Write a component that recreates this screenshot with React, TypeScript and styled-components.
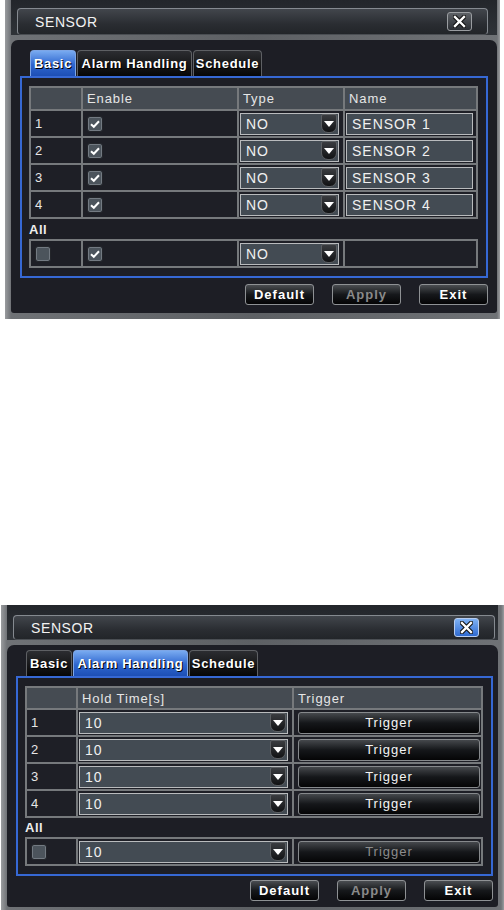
import React from "react";
import styled, { createGlobalStyle } from "styled-components";

const GlobalStyle = createGlobalStyle`
  html, body { margin: 0; padding: 0; background: #ffffff; }
  body { font-family: "Liberation Sans", Arial, sans-serif; }
`;

const Page = styled.div`
  width: 504px;
  height: 910px;
  display: flex;
  flex-direction: column;
  overflow: hidden;
`;

const Frame = styled.div<{ $left: number; $top: number; $width: number; $padR: number; $padB: number }>`
  margin-left: ${p => p.$left}px;
  margin-top: ${p => p.$top}px;
  width: ${p => p.$width}px;
  box-sizing: border-box;
  padding: 0 ${p => p.$padR}px ${p => p.$padB}px 6px;
  background: linear-gradient(90deg, #9a9c9f 0, #6f7276 6px, #5d6064 50%, #6f7276 calc(100% - 3px), #9a9c9f 100%);
  display: flex;
  flex-direction: column;
`;

const Header = styled.div<{ $padT: number; $padR: number }>`
  padding: ${p => p.$padT}px ${p => p.$padR}px 0 6px;
  background: linear-gradient(#23262b, #2f3338);
`;

const TitleBar = styled.div<{ $h: number }>`
  height: ${p => p.$h}px;
  box-sizing: border-box;
  border: 1px solid #858a90;
  border-bottom-color: #4a4e53;
  border-radius: 4px;
  background: linear-gradient(#42464c, #2a2d32 60%, #222529);
  display: flex;
  align-items: center;
  justify-content: space-between;
  padding: 0 15px 0 17px;
  color: #f2f2f2;
  font-size: 14px;
  letter-spacing: 0.6px;
`;

const CloseBtn = styled.div<{ $blue?: boolean }>`
  width: 25px;
  height: 19px;
  box-sizing: border-box;
  border: 1px solid ${p => (p.$blue ? "#b8cdf0" : "#9a9da1")};
  border-radius: 3px;
  background: ${p =>
    p.$blue ? "linear-gradient(#7fb2f5, #2f6ad0)" : "linear-gradient(#5d6166, #2b2e33)"};
  display: flex;
  align-items: center;
  justify-content: center;
`;

const Body = styled.div<{ $padT: number; $padR: number; $padB: number }>`
  margin-top: 5px;
  background: #1d1e25;
  border-radius: 7px 7px 3px 3px;
  padding: ${p => p.$padT}px ${p => p.$padR}px ${p => p.$padB}px 9px;
  display: flex;
  flex-direction: column;
`;

const TabRow = styled.div`
  display: flex;
  gap: 1px;
  padding-left: 10px;
`;

const Tab = styled.div<{ $active?: boolean; $w: number }>`
  width: ${p => p.$w}px;
  height: 26px;
  box-sizing: border-box;
  border: 1px solid ${p => (p.$active ? "#7ea6e6" : "#5e6064")};
  border-bottom: none;
  border-radius: 4px 4px 0 0;
  background: ${p =>
    p.$active ? "linear-gradient(#78aaf0, #2e66cf 55%, #1d4fb5)" : "linear-gradient(#2c2d31, #060606)"};
  color: #ffffff;
  font-size: 13px;
  font-weight: bold;
  letter-spacing: 0.7px;
  white-space: nowrap;
  display: flex;
  align-items: center;
  justify-content: center;
  text-shadow: 1px 1px 0 #000;
`;

const BlueBox = styled.div`
  border: 2px solid #3668d4;
  padding: 8px 8px 8px 7px;
`;

const Grid = styled.div<{ $cols: string; $headH?: number }>`
  display: grid;
  grid-template-columns: ${p => p.$cols};
  ${p => (p.$headH ? `grid-template-rows: ${p.$headH}px;` : "")}
  grid-auto-rows: 25px;
  gap: 2px;
  padding: 2px;
  background: #76797c;
`;

const Cell = styled.div<{ $head?: boolean }>`
  background: ${p => (p.$head ? "#454b52" : "#1e1f26")};
  display: flex;
  align-items: center;
  padding-left: 4px;
  color: #e6e6e6;
  font-size: 13px;
  letter-spacing: 0.9px;
  min-width: 0;
`;

const AllLabel = styled.div<{ $h: number }>`
  height: ${p => p.$h}px;
  display: flex;
  align-items: center;
  color: #eeeeee;
  font-size: 13px;
  font-weight: bold;
  letter-spacing: 0.5px;
`;

const Check = styled.span`
  width: 16px;
  height: 16px;
  box-sizing: border-box;
  border: 1px solid #23252a;
  border-radius: 3px;
  background: #4c545c;
  box-shadow: inset 0 0 0 1px #737a82;
  display: flex;
  align-items: center;
  justify-content: center;
`;

const Field = styled.div<{ $h: number; $mr: number }>`
  flex: 1;
  height: ${p => p.$h}px;
  box-sizing: border-box;
  margin: 0 ${p => p.$mr}px 0 -3px;
  border: 1px solid #b9bbbd;
  background: #434b53;
  display: flex;
  align-items: center;
  justify-content: space-between;
  padding-left: 5px;
  color: #f0f0f0;
  font-size: 14px;
  letter-spacing: 1px;
`;

const DropBtn = styled.span`
  width: 16px;
  height: 19px;
  box-sizing: border-box;
  margin-right: 1px;
  border: 1px solid #5b5e62;
  border-radius: 2px 2px 7px 7px;
  background: linear-gradient(#3a3c40, #111214);
  display: flex;
  align-items: center;
  justify-content: center;
`;

const TriggerBtn = styled.div<{ $disabled?: boolean }>`
  flex: 1;
  height: 22px;
  box-sizing: border-box;
  margin-right: 1px;
  border: 1px solid #86898c;
  border-radius: 3px;
  background: linear-gradient(#45484c, #15171a 50%, #050506);
  color: ${p => (p.$disabled ? "#8c8c8c" : "#f4f4f4")};
  font-size: 13px;
  letter-spacing: 1px;
  display: flex;
  align-items: center;
  justify-content: center;
`;

const Footer = styled.div<{ $mt: number; $padR: number }>`
  margin-top: ${p => p.$mt}px;
  padding-right: ${p => p.$padR}px;
  display: flex;
  justify-content: flex-end;
  gap: 18px;
`;

const Button = styled.div<{ $disabled?: boolean }>`
  width: 69px;
  height: 21px;
  box-sizing: border-box;
  border: 1px solid #8e9194;
  border-radius: 3px;
  background: linear-gradient(#4a4d51, #16181b 50%, #040405);
  color: ${p => (p.$disabled ? "#8a8a8a" : "#ffffff")};
  font-size: 13px;
  font-weight: bold;
  letter-spacing: 1px;
  display: flex;
  align-items: center;
  justify-content: center;
`;

const CloseIcon = () => (
  <svg width="13" height="13" viewBox="0 0 13 13">
    <path d="M2 2 L11 11 M11 2 L2 11" stroke="#111" strokeWidth="4.5" strokeLinecap="square" />
    <path d="M2 2 L11 11 M11 2 L2 11" stroke="#fff" strokeWidth="2.4" strokeLinecap="square" />
  </svg>
);

const Tick = () => (
  <svg width="12" height="12" viewBox="0 0 12 12">
    <path d="M2 6.2 L4.8 8.8 L10 3.2" fill="none" stroke="#fff" strokeWidth="2" />
  </svg>
);

const Arrow = () => (
  <svg width="10" height="8" viewBox="0 0 10 8">
    <polygon points="0,1 10,1 5,7" fill="#fff" />
  </svg>
);

const CheckBox = ({ checked }: { checked?: boolean }) => <Check>{checked && <Tick />}</Check>;

const Select = ({ value }: { value: string }) => (
  <Field $h={22} $mr={4}>
    {value}
    <DropBtn>
      <Arrow />
    </DropBtn>
  </Field>
);

type DialogProps = {
  left: number;
  top: number;
  width: number;
  frameR: number;
  frameB: number;
  titleT: number;
  titleR: number;
  titleH: number;
  blueClose?: boolean;
  bodyT: number;
  bodyR: number;
  bodyB: number;
  active: number;
  footerMt: number;
  footerR: number;
  children: React.ReactNode;
};

const Dialog = (p: DialogProps) => (
  <Frame $left={p.left} $top={p.top} $width={p.width} $padR={p.frameR} $padB={p.frameB}>
    <Header $padT={p.titleT} $padR={p.titleR}>
      <TitleBar $h={p.titleH}>
        SENSOR
        <CloseBtn $blue={p.blueClose}>
          <CloseIcon />
        </CloseBtn>
      </TitleBar>
    </Header>
    <Body $padT={p.bodyT} $padR={p.bodyR} $padB={p.bodyB}>
      <TabRow>
        <Tab $w={46} $active={p.active === 0}>Basic</Tab>
        <Tab $w={115} $active={p.active === 1}>Alarm Handling</Tab>
        <Tab $w={69} $active={p.active === 2}>Schedule</Tab>
      </TabRow>
      <BlueBox>{p.children}</BlueBox>
      <Footer $mt={p.footerMt} $padR={p.footerR}>
        <Button>Default</Button>
        <Button $disabled>Apply</Button>
        <Button>Exit</Button>
      </Footer>
    </Body>
  </Frame>
);

const basicCols = "50px 154px 104px 131px";
const alarmCols = "49px 214px 187px";
const sensors = [1, 2, 3, 4];

export default function App() {
  return (
    <Page>
      <GlobalStyle />
      <Dialog
        left={5} top={0} width={495} frameR={3} frameB={6}
        titleT={8} titleR={9} titleH={27}
        bodyT={10} bodyR={9} bodyB={8} active={0} footerMt={6} footerR={0}
      >
        <Grid $cols={basicCols} $headH={21}>
          <Cell $head />
          <Cell $head>Enable</Cell>
          <Cell $head>Type</Cell>
          <Cell $head>Name</Cell>
          {sensors.map(n => (
            <React.Fragment key={n}>
              <Cell>{n}</Cell>
              <Cell><CheckBox checked /></Cell>
              <Cell><Select value="NO" /></Cell>
              <Cell><Field $h={22} $mr={3}>SENSOR {n}</Field></Cell>
            </React.Fragment>
          ))}
        </Grid>
        <AllLabel $h={20}>All</AllLabel>
        <Grid $cols={basicCols}>
          <Cell><CheckBox /></Cell>
          <Cell><CheckBox checked /></Cell>
          <Cell><Select value="NO" /></Cell>
          <Cell />
        </Grid>
      </Dialog>

      <Dialog
        left={1} top={286} width={503} frameR={6} frameB={4}
        titleT={10} titleR={3} titleH={25} blueClose
        bodyT={5} bodyR={5} bodyB={6} active={1} footerMt={4} footerR={0}
      >
        <Grid $cols={alarmCols} $headH={20}>
          <Cell $head />
          <Cell $head>Hold Time[s]</Cell>
          <Cell $head>Trigger</Cell>
          {sensors.map(n => (
            <React.Fragment key={n}>
              <Cell>{n}</Cell>
              <Cell><Select value="10" /></Cell>
              <Cell><TriggerBtn>Trigger</TriggerBtn></Cell>
            </React.Fragment>
          ))}
        </Grid>
        <AllLabel $h={19}>All</AllLabel>
        <Grid $cols={alarmCols}>
          <Cell><CheckBox /></Cell>
          <Cell><Select value="10" /></Cell>
          <Cell><TriggerBtn $disabled>Trigger</TriggerBtn></Cell>
        </Grid>
      </Dialog>
    </Page>
  );
}
